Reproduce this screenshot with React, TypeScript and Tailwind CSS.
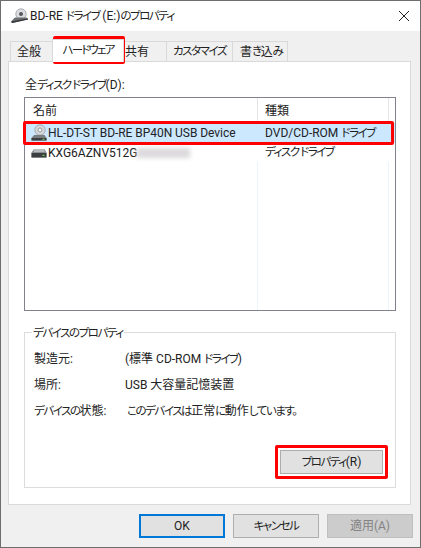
import React from 'react';

// kana in the reference font is much narrower than in Noto CJK
const K = ({ children }: { children: React.ReactNode }) => (
  <span className="text-[11.5px] tracking-[-1.45px]">{children}</span>
);

const DiscIcon = () => (
  <svg width="17" height="18" viewBox="0 0 17 18" className="shrink-0">
    <circle cx="9" cy="6" r="5.2" fill="#d4d8da" stroke="#9aa0a4" strokeWidth="0.8" />
    <circle cx="9" cy="6" r="2" fill="#f4f6f7" stroke="#80868a" strokeWidth="0.8" />
    <path d="M3 11 L13.5 11 L15.5 14 L15.5 16.5 L0.5 16.5 L0.5 14 Z" fill="#7a7e81" />
    <rect x="0.5" y="14" width="15" height="2.5" fill="#3c3f41" />
    <rect x="11.5" y="14.8" width="2" height="1" fill="#7fe05a" />
  </svg>
);

const DiskIcon = () => (
  <svg width="17" height="16" viewBox="0 0 17 16" className="shrink-0">
    <path d="M3 4 L13.5 4 L15.5 7.5 L15.5 12.5 L0.5 12.5 L0.5 7.5 Z" fill="#8a8e90" />
    <rect x="3" y="4" width="10.5" height="3" fill="#b9bcbe" />
    <rect x="0.5" y="8" width="15" height="4.5" fill="#3c3f41" />
    <rect x="11.5" y="9.8" width="2" height="1" fill="#7fe05a" />
  </svg>
);

const TitleIcon = () => (
  <svg width="20" height="16" viewBox="0 0 20 16" className="shrink-0">
    <circle cx="12" cy="6" r="5.2" fill="#dcdedf" stroke="#9a9ea1" strokeWidth="0.8" />
    <circle cx="12" cy="6" r="2" fill="#55595c" />
    <path d="M6 9.5 L18 9.5 L19 11.5 L3 15 L1.5 14 Z" fill="#6a6e71" />
    <path d="M3 13.5 L19 10.5 L19 11.5 L3 15 Z" fill="#2f3133" />
  </svg>
);

const tabs = [
  { label: '全般', width: 'w-[43px]', pad: 'pl-[6px]' },
  { label: <span className="text-[11.5px] tracking-[-1.85px]">ハードウェア</span>, width: 'w-[72px]', active: true, pad: '' },
  { label: '共有', width: 'w-[44px]', pad: 'pl-[2px]' },
  { label: <K>カスタマイズ</K>, width: 'w-[66px]', pad: 'pl-[6px]' },
  { label: <><span>書</span><K>き</K><span>込</span><K>み</K></>, width: 'w-[55px]', pad: 'pl-[7px]' },
];

const details = [
  { key: 'maker', label: '製造元:', value: <>(標準 CD-ROM <K>ドライブ</K>)</>, pad: 'pl-[91px]' },
  { key: 'place', label: '場所:', value: 'USB 大容量記憶装置', pad: 'pl-[91px]' },
  {
    key: 'state',
    label: <><K>デバイスの</K>状態:</>,
    value: <><K>このデバイスは</K>正常<K>に</K>動作<K>しています。</K></>,
    pad: 'pl-[93px]',
  },
];

export default function App() {
  return (
    <div className="relative w-[421px] h-[548px] overflow-hidden flex flex-col bg-[#f0f0f0] border border-[#6d6d6d] text-[12px] text-[#222] [font-feature-settings:'palt'] font-['Roboto','Noto_Sans_CJK_JP',sans-serif]">
      {/* title bar */}
      <div className="h-[30px] shrink-0 bg-white flex items-center pl-[8px] pr-[9px]">
        <TitleIcon />
        <span className="ml-[1px] whitespace-pre">BD-RE <K>ドライブ</K> (E:)<K>のプロパティ</K></span>
        <svg width="12" height="12" viewBox="0 0 12 12" className="ml-auto mr-[1px]">
          <path d="M1 1 L11 11 M11 1 L1 11" stroke="#222" strokeWidth="1" fill="none" />
        </svg>
      </div>

      {/* tabs */}
      <div className="h-[30px] shrink-0 flex items-end pl-[9px]">
        {tabs.map((tab, i) =>
          tab.active ? (
            <div
              key={i}
              className={`${tab.width} h-[23px] -mb-[1px] -mx-[1px] z-10 bg-white border border-b-0 border-[#d9d9d9] flex items-center justify-center`}
            >
              {tab.label}
            </div>
          ) : (
            <div
              key={i}
              className={`${tab.width} ${tab.pad} h-[20px] bg-[#f0f0f0] border border-b-0 border-l-0 first:border-l border-[#d9d9d9] flex items-center whitespace-nowrap`}
            >
              {tab.label}
            </div>
          ),
        )}
      </div>

      {/* tab panel */}
      <div className="w-[403px] h-[444px] ml-[7px] shrink-0 bg-white border border-[#d9d9d9] flex flex-col px-[15px] pt-[14px]">
        <div className="h-[21px] leading-[19px] pl-[1px] whitespace-pre">全<K>ディスク ドライブ</K>(D):</div>

        {/* list */}
        <div className="w-[372px] h-[214px] border border-[#82828c] flex flex-col">
          <div className="h-[25px] shrink-0 flex">
            <div className="w-[233px] pl-[8px] leading-[26px] border-r border-[#e5e5e5]">名前</div>
            <div className="w-[131px] pl-[7px] leading-[26px] border-r border-[#e5e5e5]">種類</div>
          </div>
          <div className="h-[20px] shrink-0 flex items-center bg-[#cce8ff]">
            <div className="w-[233px] flex items-center pl-[6px]">
              <DiscIcon />
              <span className="whitespace-nowrap tracking-[-0.05px]">HL-DT-ST BD-RE BP40N USB Device</span>
            </div>
            <div className="pl-[7px] whitespace-nowrap">DVD/CD-ROM <K>ドライブ</K></div>
          </div>
          <div className="h-[19px] shrink-0 flex items-center">
            <div className="w-[233px] flex items-center pl-[6px]">
              <DiskIcon />
              <span>KXG6AZNV512G</span>
              <div className="w-[53px] h-[10px] bg-[#dcdadc] blur-[2px]" />
            </div>
            <div className="pl-[7px] whitespace-pre"><K>ディスク ドライブ</K></div>
          </div>
          <div className="flex-1 flex">
            <div className="w-[233px] border-r border-[#eef4fb]" />
            <div className="w-[131px] border-r border-[#eef4fb]" />
          </div>
        </div>

        {/* group box */}
        <div className="relative w-[372px] h-[156px] mt-[21px] border border-[#dcdcdc] flex flex-col px-[9px] pt-[16px]">
          <span className="absolute -top-[9px] left-[7px] bg-white px-[1px]"><K>デバイスのプロパティ</K></span>
          {details.map(row => (
            <div key={row.key} className="relative h-[26px] leading-[20px] whitespace-nowrap">
              <span className="absolute left-0 top-0">{row.label}</span>
              <span className={row.pad}>{row.value}</span>
            </div>
          ))}
          <button className="absolute left-[255px] top-[117px] w-[103px] h-[24px] bg-[#e1e1e1] border border-[#adadad]">
            <K>プロパティ</K>(R)
          </button>
        </div>
      </div>

      {/* footer */}
      <div className="flex justify-end gap-[8px] pt-[9px] pr-[7px]">
        <button className="w-[86px] h-[24px] bg-[#e1e1e1] border-2 border-[#0078d7]">OK</button>
        <button className="w-[86px] h-[24px] bg-[#e1e1e1] border border-[#adadad]"><K>キャンセル</K></button>
        <button className="w-[86px] h-[24px] bg-[#cccccc] border border-[#bfbfbf] text-[#838383]">適用(A)</button>
      </div>

      {/* red highlights drawn over the dialog */}
      <div className="absolute left-[52px] top-[35px] w-[72px] h-[28px] border-[3px] border-[#ff0000] rounded-[2px]" />
      <div className="absolute left-[22px] top-[120px] w-[371px] h-[24px] border-[3px] border-[#ff0000] rounded-[2px]" />
      <div className="absolute left-[274px] top-[444px] w-[113px] h-[34px] border-[3px] border-[#ff0000] rounded-[2px]" />
    </div>
  );
}
